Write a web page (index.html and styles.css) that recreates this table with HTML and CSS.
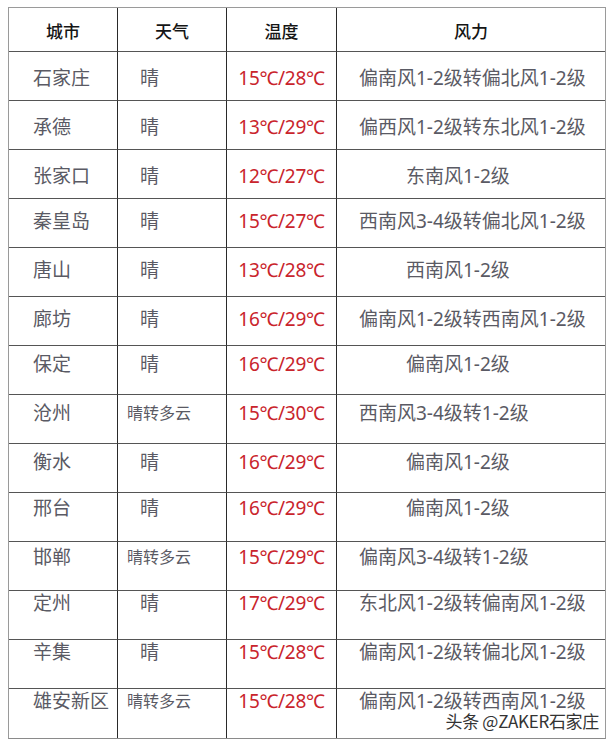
FILE: index.html
```html
<!DOCTYPE html>
<html lang="zh-CN">
<head>
<meta charset="utf-8">
<title>天气预报</title>
<link rel="stylesheet" href="styles.css">
</head>
<body>
<div class="page">
  <table class="weather">
    <colgroup>
      <col class="c-city"><col class="c-wx"><col class="c-temp"><col class="c-wind">
    </colgroup>
    <thead>
      <tr><th>城市</th><th>天气</th><th>温度</th><th>风力</th></tr>
    </thead>
    <tbody>
      <tr><td class="city">石家庄</td><td class="wx">晴</td><td class="temp">15℃/28℃</td><td class="wind">偏南风1-2级转偏北风1-2级</td></tr>
      <tr><td class="city">承德</td><td class="wx">晴</td><td class="temp">13℃/29℃</td><td class="wind">偏西风1-2级转东北风1-2级</td></tr>
      <tr><td class="city">张家口</td><td class="wx">晴</td><td class="temp">12℃/27℃</td><td class="wind short">东南风1-2级</td></tr>
      <tr class="lift-s"><td class="city">秦皇岛</td><td class="wx">晴</td><td class="temp">15℃/27℃</td><td class="wind">西南风3-4级转偏北风1-2级</td></tr>
      <tr class="lift-s"><td class="city">唐山</td><td class="wx">晴</td><td class="temp">13℃/28℃</td><td class="wind short">西南风1-2级</td></tr>
      <tr class="lift-s"><td class="city">廊坊</td><td class="wx">晴</td><td class="temp">16℃/29℃</td><td class="wind">偏南风1-2级转西南风1-2级</td></tr>
      <tr class="lift-m"><td class="city">保定</td><td class="wx">晴</td><td class="temp">16℃/29℃</td><td class="wind short">偏南风1-2级</td></tr>
      <tr class="lift-m"><td class="city">沧州</td><td class="wx small">晴转多云</td><td class="temp">15℃/30℃</td><td class="wind">西南风3-4级转1-2级</td></tr>
      <tr class="lift-m"><td class="city">衡水</td><td class="wx">晴</td><td class="temp">16℃/29℃</td><td class="wind short">偏南风1-2级</td></tr>
      <tr class="lift-l"><td class="city">邢台</td><td class="wx">晴</td><td class="temp">16℃/29℃</td><td class="wind short">偏南风1-2级</td></tr>
      <tr class="lift-l"><td class="city">邯郸</td><td class="wx small">晴转多云</td><td class="temp">15℃/29℃</td><td class="wind">偏南风3-4级转1-2级</td></tr>
      <tr class="lift-xl"><td class="city">定州</td><td class="wx">晴</td><td class="temp">17℃/29℃</td><td class="wind">东北风1-2级转偏南风1-2级</td></tr>
      <tr class="lift-xl"><td class="city">辛集</td><td class="wx">晴</td><td class="temp">15℃/28℃</td><td class="wind">偏南风1-2级转偏北风1-2级</td></tr>
      <tr class="lift-xl"><td class="city">雄安新区</td><td class="wx small">晴转多云</td><td class="temp">15℃/28℃</td><td class="wind">偏南风1-2级转西南风1-2级</td></tr>
    </tbody>
  </table>
  <div class="watermark">头条 @ZAKER石家庄</div>
</div>
</body>
</html>
```
FILE: styles.css
```css
html, body {
  margin: 0;
  padding: 0;
  background: #ffffff;
}

.page {
  position: relative;
  width: 613px;
  height: 745px;
  padding: 7px 0 0 8px;
  box-sizing: border-box;
  font-family: "Noto Sans", "Noto Sans CJK SC", sans-serif;
}

.weather {
  border-collapse: separate;
  border-spacing: 0;
  table-layout: fixed;
  width: 598px;
  border-top: 1px solid #9a9a9a;
  border-left: 1px solid #9a9a9a;
  border-right: 1px solid #9a9a9a;
  border-bottom: 1px solid #8a8a8a;
}

.c-city { width: 109px; }
.c-wx { width: 109px; }
.c-temp { width: 110px; }
.c-wind { width: 268px; }

.weather th,
.weather td {
  padding: 0;
  border-right: 1px solid #2a2a2a;
  border-bottom: 1px solid #555555;
  white-space: nowrap;
  box-sizing: border-box;
}

.weather th:last-child,
.weather td:last-child {
  border-right: none;
}

.weather tbody tr:last-child td {
  border-bottom: none;
}

.weather th {
  height: 44px;
  padding-top: 1px;
  vertical-align: middle;
  font-family: "Noto Sans CJK SC", sans-serif;
  font-weight: 500;
  font-size: 17px;
  color: #151515;
  text-align: center;
}

.weather td {
  height: 49px;
  vertical-align: top;
  padding-top: 14px;
  line-height: 24px;
  font-size: 19px;
  color: #5a5a64;
}

.weather tr.lift-s td { padding-top: 10px; }
.weather tr.lift-m td { padding-top: 6px; }
.weather tr.lift-l td { padding-top: 3px; }
.weather tr.lift-xl td { padding-top: 0; }

.weather td.city {
  padding-left: 24px;
  text-align: left;
}

.weather td.wx {
  padding-left: 22px;
  text-align: left;
}

.weather td.wx.small {
  padding-left: 9px;
  font-size: 16px;
}

.weather td.temp {
  text-align: center;
  color: #c9242c;
  letter-spacing: -0.3px;
}

.weather td.wind {
  text-align: left;
  padding-left: 22px;
}

.weather td.wind.short {
  padding-left: 69px;
}

.watermark {
  position: absolute;
  right: 14px;
  top: 709px;
  font-family: "Noto Sans CJK SC", sans-serif;
  font-size: 17px;
  line-height: 24px;
  color: #333333;
  text-shadow: 0 0 2px #ffffff, 0 0 2px #ffffff, 0 0 1px #ffffff;
  letter-spacing: -0.3px;
}
```
